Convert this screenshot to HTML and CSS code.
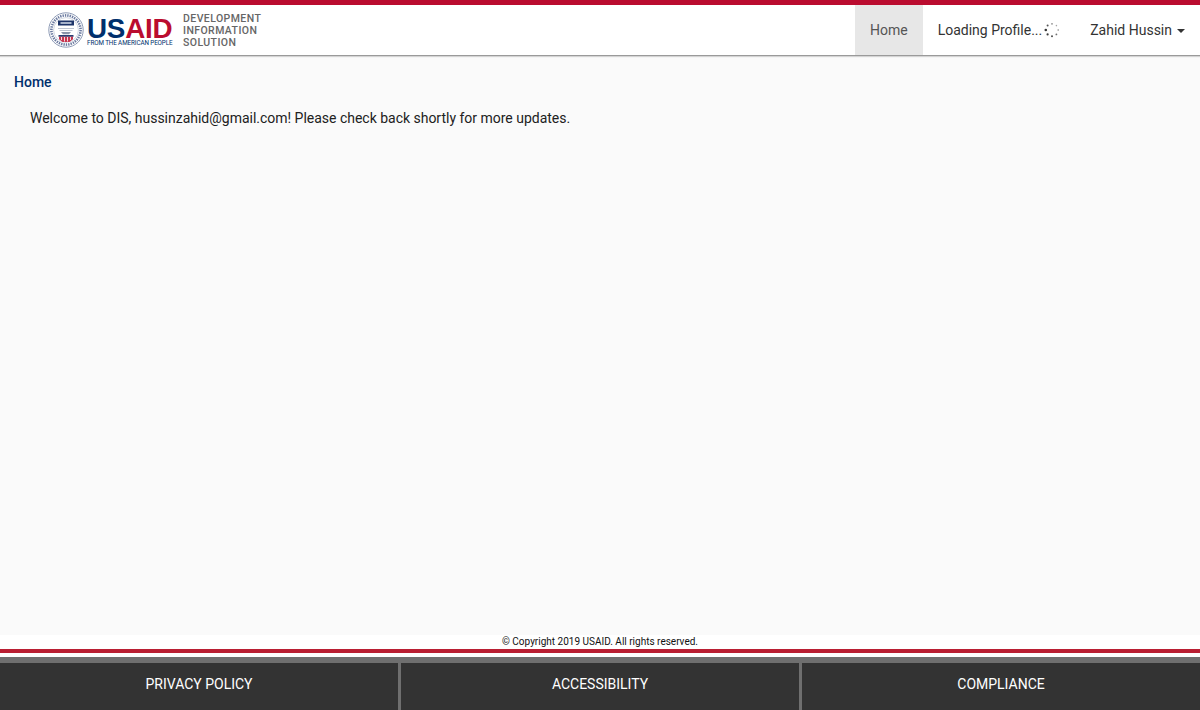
FILE: index.html
```html
<!DOCTYPE html>
<html lang="en">
<head>
<meta charset="utf-8">
<title>Development Information Solution</title>
<link rel="stylesheet" href="styles.css">
</head>
<body>
<div class="page">
  <header class="topbar">
    <div class="brand">
      <svg class="seal" width="36" height="38" viewBox="0 0 36 38" aria-hidden="true">
        <circle cx="18" cy="19" r="17.2" fill="#fff" stroke="#8d9ab5" stroke-width="1"/>
        <circle cx="18" cy="19" r="14.6" fill="none" stroke="#6c7ba0" stroke-width="2.6" stroke-dasharray="1.4 1"/>
        <circle cx="18" cy="19" r="12.4" fill="#fff" stroke="#b4bccd" stroke-width=".6"/>
        <rect x="10" y="9.500" width="16" height="5" fill="#1d3469"/>
        <rect x="12.500" y="11.200" width="11" height="1.600" fill="#c9d1e2"/>
        <path d="M10 17.500h16M11.500 19.500h13" stroke="#b6bdcc" stroke-width=".9"/>
        <path d="M13 21h10l-2 2.200h-6z" fill="#8a94aa"/>
        <rect x="10.500" y="24" width="15" height="1.800" fill="#2a3f73"/>
        <path d="M11 25.800h14v2.400l-3.500 2.800h-7l-3.500-2.800z" fill="#c8354f"/>
        <path d="M13.500 26v3M16.500 26v4.500M19.500 26v4.500M22.500 26v3" stroke="#fff" stroke-width=".8"/>
      </svg>
      <div class="wordmark">
        <div class="usaid"><span class="us">US</span><span class="aid">AID</span></div>
        <div class="tagline">FROM THE AMERICAN PEOPLE</div>
      </div>
      <div class="appname">DEVELOPMENT<br>INFORMATION<br>SOLUTION</div>
    </div>
    <nav class="nav">
      <a class="nav-item active">Home</a>
      <a class="nav-item loading">Loading Profile...
        <svg class="spinner" width="16" height="16" viewBox="0 0 16 16" aria-hidden="true">
          <circle cx="8" cy="1.800" r=".9" fill="#8f8f8f"/>
          <circle cx="12.400" cy="3.600" r=".8" fill="#a5a5a5"/>
          <circle cx="14.200" cy="8" r=".8" fill="#8a8a8a"/>
          <circle cx="12.400" cy="12.400" r=".9" fill="#707070"/>
          <circle cx="8" cy="14.200" r="1" fill="#4f4f4f"/>
          <circle cx="3.600" cy="12.400" r="1.100" fill="#3d3d3d"/>
          <circle cx="1.800" cy="8" r="1.300" fill="#333"/>
          <circle cx="3.600" cy="3.600" r="1" fill="#555"/>
        </svg>
      </a>
      <a class="nav-item user">Zahid Hussin<span class="caret"></span></a>
    </nav>
  </header>
  <main class="main">
    <h1 class="crumb">Home</h1>
    <p class="welcome">Welcome to DIS, hussinzahid@gmail.com! Please check back shortly for more updates.</p>
  </main>
  <footer class="footer">
    <div class="copyright">© Copyright 2019 USAID. All rights reserved.</div>
    <div class="redline"></div>
    <div class="links">
      <a class="link">PRIVACY POLICY</a>
      <a class="link">ACCESSIBILITY</a>
      <a class="link">COMPLIANCE</a>
    </div>
  </footer>
</div>
</body>
</html>
```
FILE: styles.css
```css
* { box-sizing: border-box; }
html, body { margin: 0; height: 100%; }
body { font-family: Roboto, "Liberation Sans", sans-serif; font-size: 14px; color: #212121; background: #fafafa; }
.page { height: 710px; display: flex; flex-direction: column; overflow: hidden; }

.topbar {
  height: 56px; flex: none; display: flex; justify-content: space-between;
  background: #fff; border-top: 5px solid #ba0c2f; border-bottom: 1px solid #9a9a9a;
  box-shadow: 0 1px 1px rgba(0,0,0,.15); position: relative;
}
.brand { display: flex; align-items: center; padding-left: 48px; }
.seal { flex: none; }
.wordmark { margin-left: 3px; width: 85px; }
.usaid { font-family: "Liberation Sans", Arial, sans-serif; font-weight: 700; font-size: 27.800px; line-height: 23px; letter-spacing: -.25px; white-space: nowrap; margin-top: 3px; }
.us { color: #002f6c; }
.aid { color: #ba0c2f; }
.tagline { font-size: 6.300px; line-height: 7px; color: #002f6c; white-space: nowrap; letter-spacing: -.1px; }
.appname { margin-left: 11px; margin-top: 2px; font-size: 10.500px; font-weight: 500; line-height: 12px; color: #666; letter-spacing: .42px; }

.nav { display: flex; align-items: stretch; }
.nav-item { display: flex; align-items: center; padding: 0 15px; font-size: 14px; color: #333; }
.nav-item.active { background: #e7e7e7; color: #555; }
.spinner { margin-left: 2px; }
.caret { margin-left: 5px; margin-top: 1px; width: 0; height: 0; border-left: 4px solid transparent; border-right: 4px solid transparent; border-top: 4px solid #333; }

.main { flex: 1; background: #fafafa; padding: 18px 14px 0; }
.crumb { margin: 0; font-size: 14px; line-height: 17px; font-weight: 500; color: #002f6c; }
.welcome { margin: 18px 0 0 16px; font-size: 14px; line-height: 18px; color: #212121; letter-spacing: -.012px; }

.footer { flex: none; background: #fff; }
.copyright { height: 14px; text-align: center; font-size: 10px; line-height: 14px; color: #111; }
.redline { height: 4px; background: #ba1f33; }
.links { margin-top: 4px; border-top: 6px solid #6f6f6f; height: 53px; display: flex; background: #333; }
.link { flex: 1 1 0; display: flex; align-items: center; justify-content: center; padding-bottom: 5px; color: #fff; font-size: 14px; }
.link + .link { border-left: 3px solid #6f6f6f; }
```
